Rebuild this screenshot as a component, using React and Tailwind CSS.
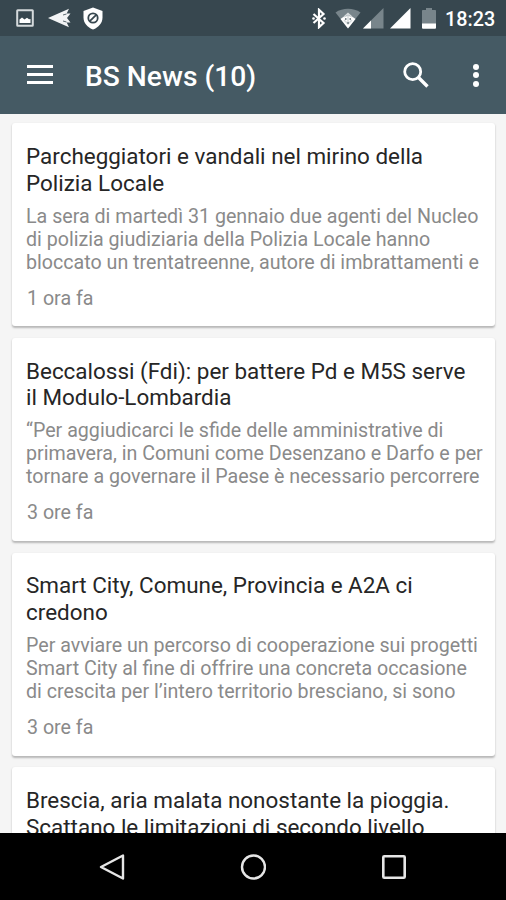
import React from 'react'

const articles = [
  {
    id: 1,
    title: ['Parcheggiatori e vandali nel mirino della', 'Polizia Locale'],
    excerpt: [
      'La sera di martedì 31 gennaio due agenti del Nucleo',
      'di polizia giudiziaria della Polizia Locale hanno',
      'bloccato un trentatreenne, autore di imbrattamenti e'
    ],
    time: '1 ora fa'
  },
  {
    id: 2,
    title: ['Beccalossi (Fdi): per battere Pd e M5S serve', 'il Modulo-Lombardia'],
    excerpt: [
      '“Per aggiudicarci le sfide delle amministrative di',
      'primavera, in Comuni come Desenzano e Darfo e per',
      'tornare a governare il Paese è necessario percorrere'
    ],
    time: '3 ore fa'
  },
  {
    id: 3,
    title: ['Smart City, Comune, Provincia e A2A ci', 'credono'],
    excerpt: [
      'Per avviare un percorso di cooperazione sui progetti',
      'Smart City al fine di offrire una concreta occasione',
      'di crescita per l’intero territorio bresciano, si sono'
    ],
    time: '3 ore fa'
  },
  {
    id: 4,
    title: ['Brescia, aria malata nonostante la pioggia.', 'Scattano le limitazioni di secondo livello'],
    excerpt: [],
    time: ''
  }
]

const StatusBar = () => (
  <div className="h-9 shrink-0 bg-[#37474f] flex items-center justify-between pl-4 pr-[11px] text-white">
    <div className="flex items-center">
      <svg className="w-[18px] h-[18px]" viewBox="0 0 18 18">
        <rect x="1.200" y="1.200" width="15.600" height="15.600" rx=".5" fill="none" stroke="#d5dadc" strokeWidth="2" />
        <path d="M3.500 14v-3.500l2.500-2 2.500 2 2.500-1.700 2 1.500 1.500-.3v4z" fill="#fff" />
      </svg>
      <svg className="w-[23px] h-[20px] ml-[14px]" viewBox="0 0 23 20">
        <path d="M0 10 21 .8l-2.300 4.700 3.800 0-3.500 4.500 3.500 4.500-3.800 0 2.300 4.700z" fill="#f2f4f5" />
        <path d="M15 7l3.500-1M15 13l3.500 1" stroke="#37474f" strokeWidth=".8" />
      </svg>
      <svg className="w-[20px] h-[23px] ml-[12px]" viewBox="0 0 20 23">
        <path d="M10 .5 19.500 4v6.500c0 5.500-4 10-9.500 12-5.500-2-9.500-6.500-9.500-12V4z" fill="#fff" />
        <circle cx="10" cy="11" r="4.700" fill="none" stroke="#37474f" strokeWidth="1.800" />
        <path d="M6.800 14.200 13.200 7.800" stroke="#37474f" strokeWidth="1.800" />
      </svg>
    </div>
    <div className="flex items-center">
      <svg className="w-[14px] h-[21px]" viewBox="0 0 14 21">
        <path d="M1.500 6 11.500 15 7 19.200V1.800L11.500 6 1.500 15" fill="none" stroke="#fff" strokeWidth="2.200" />
        <circle cx="1.500" cy="10.500" r="1.300" fill="#fff" />
        <circle cx="12.500" cy="10.500" r="1.300" fill="#fff" />
      </svg>
      <svg className="w-[26px] h-[21px] ml-[9px]" viewBox="0 0 26 21">
        <path d="M13 20.500 .5 4.500C7.500-.5 18.500-.5 25.500 4.500z" fill="#78858b" />
        <path d="M13 20.500 5.500 11C9.500 7 16.500 7 20.500 11z" fill="#fff" />
        <path d="M13 5v10M9 9l4-3.500L17 9M9 12l4 4 4-4" fill="none" stroke="#d5dadc" strokeWidth="1.500" />
        <path d="M10 11h1.500M14.500 11H16M12.300 15h1.500" stroke="#55646b" strokeWidth="1.500" />
      </svg>
      <svg className="w-[21px] h-[21px] ml-[2px]" viewBox="0 0 21 21">
        <path d="M20.500 0v20.500H0z" fill="#78858b" />
        <path d="M8 12.500v8H0z" fill="#fff" />
      </svg>
      <svg className="w-[21px] h-[21px] ml-[6px]" viewBox="0 0 21 21">
        <path d="M20.500 0v20.500H0z" fill="#fff" />
      </svg>
      <svg className="w-[14px] h-[21px] ml-[11px]" viewBox="0 0 14 21">
        <path d="M4 0h6v2h3.200a.8.8 0 0 1 .8.800V16H0V2.800A.8.800 0 0 1 .8 2H4z" fill="#78858b" />
        <path d="M0 15.500h14v4.300a1 1 0 0 1-1 1H1a1 1 0 0 1-1-1z" fill="#fff" />
      </svg>
      <span className="ml-[9px] mt-[3px] w-[50px] text-[19.800px] leading-6 font-medium whitespace-nowrap">18:23</span>
    </div>
  </div>
)

const Toolbar = () => (
  <header className="h-[78px] shrink-0 bg-[#455a64] flex items-center pl-[27px] pr-[27px] text-white">
    <button aria-label="Menu" className="flex flex-col gap-[5px] w-[26px] mb-px">
      <span className="h-[3px] w-full bg-white" />
      <span className="h-[3px] w-full bg-white" />
      <span className="h-[3px] w-full bg-white" />
    </button>
    <h1 className="ml-[32px] mt-[4px] text-[28.200px] leading-8 font-medium whitespace-nowrap">BS News (10)</h1>
    <button aria-label="Cerca" className="ml-auto mb-px">
      <svg className="w-[26px] h-[26px]" viewBox="0 0 26 26" fill="none" stroke="#fff">
        <circle cx="9.700" cy="9.700" r="8" strokeWidth="2.800" />
        <path d="M15.500 15.500 24.500 24.500" strokeWidth="3.400" />
      </svg>
    </button>
    <button aria-label="Altro" className="ml-[44px] flex flex-col gap-[2.500px]">
      <span className="w-[6px] h-[6px] rounded-full bg-white" />
      <span className="w-[6px] h-[6px] rounded-full bg-white" />
      <span className="w-[6px] h-[6px] rounded-full bg-white" />
    </button>
  </header>
)

const ArticleCard = ({ article }) => (
  <article className="h-[203px] shrink-0 rounded-[3px] bg-white px-[14px] pt-[19.700px] shadow-[0_1.500px_2px_rgba(0,0,0,0.25)] whitespace-nowrap">
    <h2 className="text-[22.450px] leading-[26.700px] text-[#262626]">
      {article.title.map(line => (
        <span key={line} className="block">{line}</span>
      ))}
    </h2>
    <p className="mt-[8.300px] text-[19.650px] leading-[23px] text-[#8a8a8a]">
      {article.excerpt.map(line => (
        <span key={line} className="block">{line}</span>
      ))}
    </p>
    <p className="mt-[13px] ml-px text-[19.650px] leading-[23px] text-[#8a8a8a]">{article.time}</p>
  </article>
)

const App = () => {
  return (
    <div className="w-[506px] h-[900px] flex flex-col overflow-hidden bg-[#f5f5f5] font-['Roboto',sans-serif]">
      <StatusBar />
      <Toolbar />
      <main className="flex-1 min-h-0 overflow-hidden flex flex-col gap-[11.700px] pt-[9.300px] pl-3 pr-[11px]">
        {articles.map(article => (
          <ArticleCard key={article.id} article={article} />
        ))}
      </main>
      <nav className="h-[67px] shrink-0 bg-black flex items-center justify-center gap-[115px]">
        <svg className="w-[26px] h-[26px]" viewBox="0 0 26 26" fill="none" stroke="#e6e6e6" strokeWidth="2.400" strokeLinejoin="round">
          <path d="M2 13 24 1.500v23z" />
        </svg>
        <svg className="w-[26px] h-[26px]" viewBox="0 0 26 26" fill="none" stroke="#e6e6e6" strokeWidth="2.400">
          <circle cx="13.500" cy="13" r="11.500" />
        </svg>
        <svg className="w-[26px] h-[26px]" viewBox="0 0 26 26" fill="none" stroke="#e6e6e6" strokeWidth="2.600">
          <rect x="2.300" y="2.300" width="21.400" height="21.400" rx="1" />
        </svg>
      </nav>
    </div>
  )
}

export default App
